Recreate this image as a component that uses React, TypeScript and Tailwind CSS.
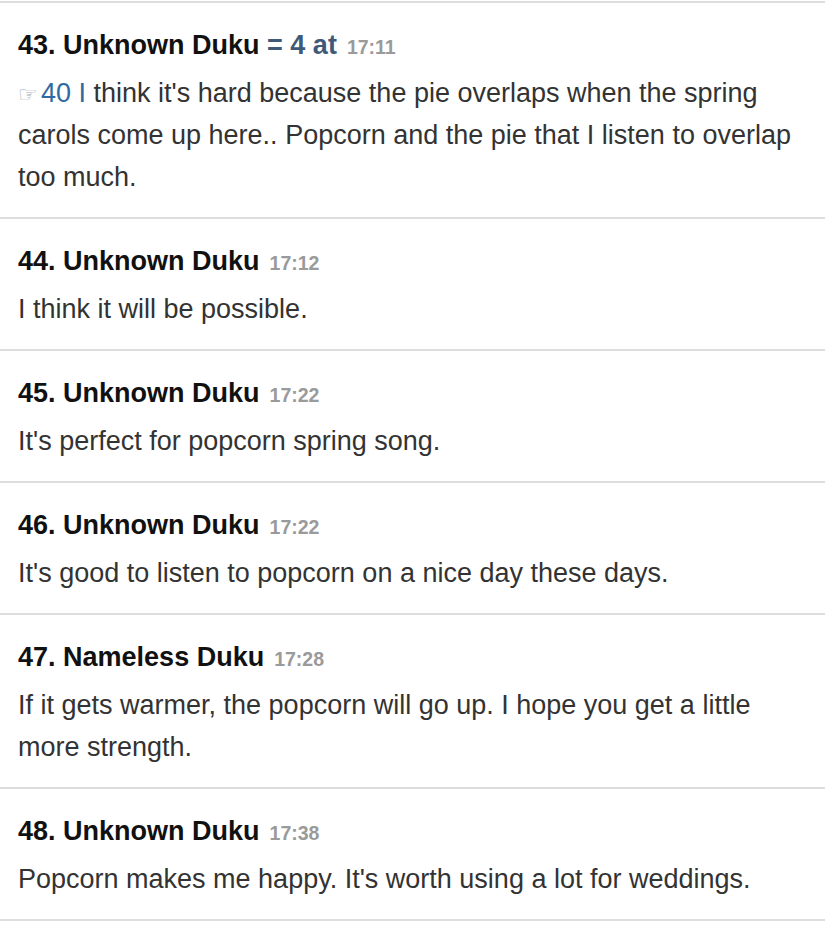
const comments = [
  { no: 43, name: "Unknown Duku", extra: "= 4 at", time: "17:11", ref: "40 I", body: " think it's hard because the pie overlaps when the spring carols come up here.. Popcorn and the pie that I listen to overlap too much." },
  { no: 44, name: "Unknown Duku", time: "17:12", body: "I think it will be possible." },
  { no: 45, name: "Unknown Duku", time: "17:22", body: "It's perfect for popcorn spring song." },
  { no: 46, name: "Unknown Duku", time: "17:22", body: "It's good to listen to popcorn on a nice day these days." },
  { no: 47, name: "Nameless Duku", time: "17:28", body: "If it gets warmer, the popcorn will go up. I hope you get a little more strength." },
  { no: 48, name: "Unknown Duku", time: "17:38", body: "Popcorn makes me happy. It's worth using a lot for weddings." },
]

type Comment = {
  no: number
  name: string
  extra?: string
  time: string
  ref?: string
  body: string
}

function Row({ c }: { c: Comment }) {
  return (
    <div className="border-b-2 border-[#dddddd] px-[18px] pt-[24px] pb-[19px]">
      <div className="h-[36px] leading-[36px] text-[27px] font-bold text-[#111111] whitespace-nowrap">
        {c.no}. {c.name}
        {c.extra && <span className="text-[#3f5a78]"> {c.extra}</span>}
        <span className="ml-[10px] text-[19.5px] text-[#9a9a9a]">{c.time}</span>
      </div>
      <p className="mt-[9px] text-[27px] leading-[42px] text-[#333333]">
        {c.ref && (
          <>
            <span className="mr-[3px] text-[22px] leading-none text-[#9aa6b4]">☞</span>
            <span className="text-[#2f6aa3]">{c.ref}</span>
          </>
        )}
        {c.body}
      </p>
    </div>
  )
}

export default function App() {
  return (
    <div className="min-h-[940px] bg-white pt-[1px]" style={{ fontFamily: '"Liberation Sans", Arial, sans-serif' }}>
      <div className="border-t-2 border-[#dddddd]">
        {comments.map((c) => (
          <Row key={c.no} c={c} />
        ))}
      </div>
    </div>
  )
}
